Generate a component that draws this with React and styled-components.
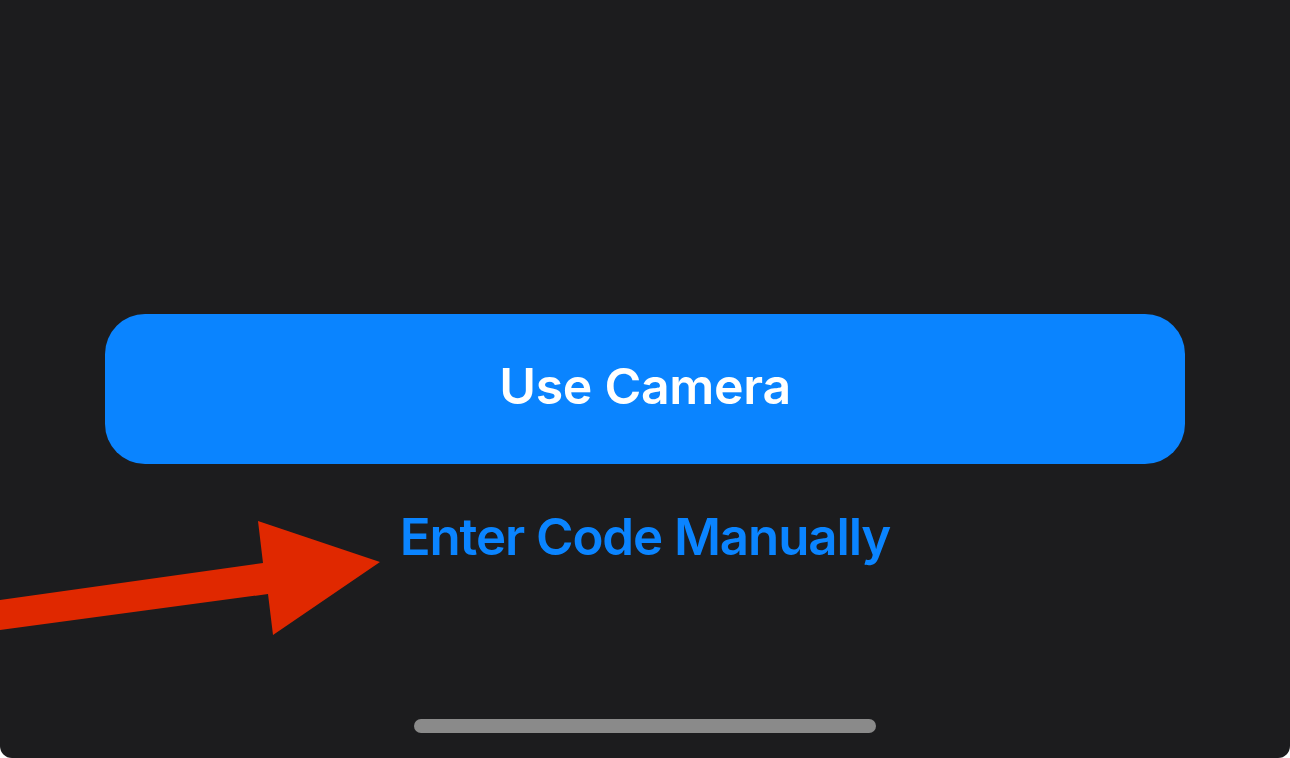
import styled, { createGlobalStyle } from 'styled-components'

const Global = createGlobalStyle`
  html, body {
    margin: 0;
    padding: 0;
    background: #ffffff;
  }
`

const Screen = styled.div`
  position: relative;
  width: 1290px;
  height: 758px;
  box-sizing: border-box;
  background: #1c1c1e;
  border-radius: 0 0 12px 12px;
  display: flex;
  flex-direction: column;
  align-items: center;
  padding-top: 314px;
  font-family: Inter, 'Liberation Sans', sans-serif;
  overflow: hidden;
`

const PrimaryButton = styled.button`
  width: 1080px;
  height: 150px;
  border: none;
  border-radius: 40px;
  background: #0a84ff;
  color: #ffffff;
  font-family: inherit;
  font-size: 50px;
  font-weight: 600;
  letter-spacing: -0.3px;
  display: flex;
  align-items: center;
  justify-content: center;
  padding: 0;
  padding-bottom: 6px;
`

const LinkButton = styled.button`
  margin-top: 37px;
  border: none;
  background: none;
  color: #0a84ff;
  font-family: inherit;
  font-size: 51px;
  font-weight: 600;
  letter-spacing: -1.1px;
  padding: 0;
  line-height: 72px;
`

const HomeIndicator = styled.div`
  margin-top: auto;
  margin-bottom: 25px;
  width: 462px;
  height: 14px;
  border-radius: 7px;
  background: #8a8a8a;
`

const Arrow = styled.svg`
  position: absolute;
  left: 0;
  top: 500px;
`

export default function App() {
  return (
    <>
      <Global />
      <Screen>
        <PrimaryButton>Use Camera</PrimaryButton>
        <LinkButton>Enter Code Manually</LinkButton>
        <HomeIndicator />
        <Arrow width="400" height="150" viewBox="0 0 400 150">
          <polygon
            points="0,100 263,63 258,21 380,62 273,135 268,94 0,130"
            fill="#e02800"
          />
        </Arrow>
      </Screen>
    </>
  )
}
